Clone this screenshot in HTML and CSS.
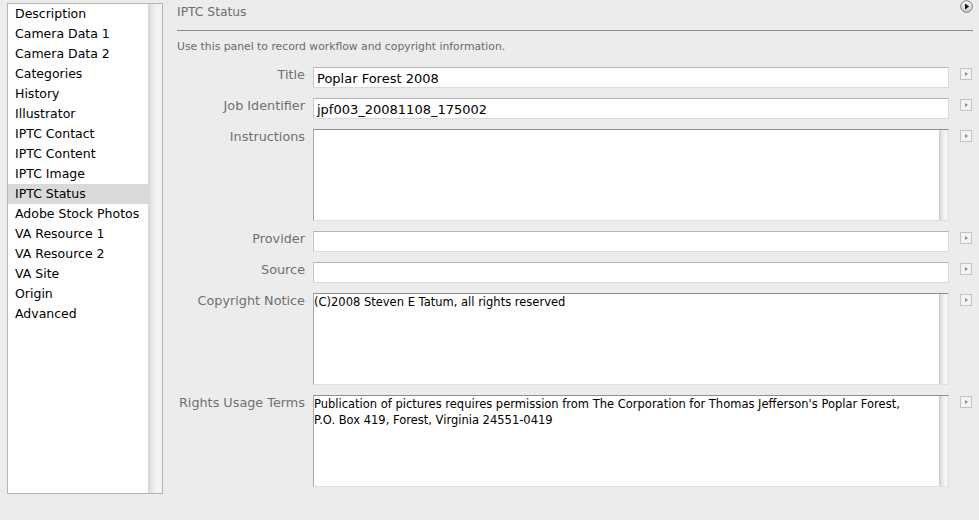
FILE: index.html
```html
<!DOCTYPE html>
<html>
<head>
<meta charset="utf-8">
<link rel="stylesheet" href="styles.css">
</head>
<body>
<div class="app">
  <div class="sidebar">
    <ul class="list">
      <li>Description</li>
      <li>Camera Data 1</li>
      <li>Camera Data 2</li>
      <li>Categories</li>
      <li>History</li>
      <li>Illustrator</li>
      <li>IPTC Contact</li>
      <li>IPTC Content</li>
      <li>IPTC Image</li>
      <li class="selected">IPTC Status</li>
      <li>Adobe Stock Photos</li>
      <li>VA Resource 1</li>
      <li>VA Resource 2</li>
      <li>VA Site</li>
      <li>Origin</li>
      <li>Advanced</li>
    </ul>
    <div class="track"></div>
  </div>
  <div class="main">
    <div class="header">
      <span class="title">IPTC Status</span>
      <svg class="menu-icon" width="13" height="13" viewBox="0 0 13 13">
        <defs>
          <linearGradient id="g" x1="0" y1="0" x2="0" y2="1">
            <stop offset="0" stop-color="#ffffff"/>
            <stop offset="1" stop-color="#c8c8c8"/>
          </linearGradient>
        </defs>
        <circle cx="6.5" cy="6.5" r="5.8" fill="url(#g)" stroke="#7a7a7a" stroke-width="1"/>
        <path d="M5 3.6 L9.2 6.5 L5 9.4 Z" fill="#111"/>
      </svg>
    </div>
    <p class="intro">Use this panel to record workflow and copyright information.</p>
    <div class="form">
      <div class="row">
        <label class="label">Title</label>
        <div class="field input"><span class="value">Poplar Forest 2008</span></div>
        <span class="arrow"></span>
      </div>
      <div class="row">
        <label class="label">Job Identifier</label>
        <div class="field input"><span class="value">jpf003_20081108_175002</span></div>
        <span class="arrow"></span>
      </div>
      <div class="row">
        <label class="label">Instructions</label>
        <div class="field area"><div class="area-text"></div><div class="area-track"></div></div>
        <span class="arrow"></span>
      </div>
      <div class="row">
        <label class="label">Provider</label>
        <div class="field input"></div>
        <span class="arrow"></span>
      </div>
      <div class="row">
        <label class="label">Source</label>
        <div class="field input"></div>
        <span class="arrow"></span>
      </div>
      <div class="row">
        <label class="label">Copyright Notice</label>
        <div class="field area"><div class="area-text">(C)2008 Steven E Tatum, all rights reserved</div><div class="area-track"></div></div>
        <span class="arrow"></span>
      </div>
      <div class="row">
        <label class="label">Rights Usage Terms</label>
        <div class="field area"><div class="area-text">Publication of pictures requires permission from The Corporation for Thomas Jefferson's Poplar Forest,<br>P.O. Box 419, Forest, Virginia 24551-0419</div><div class="area-track"></div></div>
        <span class="arrow"></span>
      </div>
    </div>
  </div>
</div>
</body>
</html>
```

FILE: styles.css
```css
html, body {
  margin: 0;
  padding: 0;
  width: 979px;
  height: 520px;
  overflow: hidden;
  background: #ececec;
  font-family: "DejaVu Sans", "Liberation Sans", sans-serif;
}

.app {
  display: flex;
  align-items: flex-start;
  padding-left: 7px;
}

.sidebar {
  margin-top: 3px;
  width: 154px;
  height: 489px;
  border: 1px solid #b4b4b4;
  display: flex;
  background: #fff;
}

.list {
  list-style: none;
  margin: 0;
  padding: 0;
  width: 140px;
  background: #fff;
}

.list li {
  height: 20px;
  line-height: 20px;
  padding-left: 7px;
  font-size: 12.5px;
  color: #000;
  white-space: nowrap;
}

.list li.selected {
  background: #d9d9d9;
}

.track {
  flex: 1;
  background: linear-gradient(to right, #d6d6d6 0%, #e8e8e8 30%, #f4f4f4 65%, #f1f1f1 100%);
}

.main {
  flex: 1;
  margin-left: 14px;
  margin-right: 6px;
}

.header {
  height: 30px;
  border-bottom: 1px solid #8c8c8c;
  display: flex;
  justify-content: space-between;
  align-items: flex-start;
}

.title {
  font-size: 12.3px;
  color: #6e6e6e;
  line-height: 16px;
  padding-top: 4px;
}

.menu-icon {
  display: block;
}

.intro {
  margin: 9px 0 0 0;
  font-size: 10.8px;
  line-height: 14px;
  color: #6a6a6a;
  white-space: nowrap;
}

.form {
  margin-top: 13px;
  display: flex;
  flex-direction: column;
  gap: 10px;
}

.row {
  display: flex;
  align-items: flex-start;
}

.label {
  width: 128px;
  text-align: right;
  font-size: 12.8px;
  line-height: 15px;
  color: #707070;
  white-space: nowrap;
  flex: none;
}

.field {
  margin-left: 8px;
  width: 636px;
  box-sizing: border-box;
  background: #fff;
  flex: none;
}

.input {
  height: 21px;
  border: 1px solid #dadada;
  border-top-color: #b4b4b4;
  border-left-color: #c8c8c8;
}

.value {
  display: block;
  padding-left: 3px;
  font-size: 13px;
  line-height: 21px;
  color: #000;
  white-space: nowrap;
}

.area {
  height: 92px;
  display: flex;
  border: 1px solid #e0e0e0;
  border-top-color: #8e8e8e;
  border-left-color: #a6a6a6;
}

.area-text {
  flex: 1;
  font-size: 11.5px;
  line-height: 16px;
  color: #000;
  white-space: nowrap;
  overflow: hidden;
}

.area-track {
  width: 9px;
  background: linear-gradient(to right, #c8c8c8 0%, #e4e4e4 30%, #f6f6f6 70%, #f0f0f0 100%);
}

.arrow {
  margin-left: 11px;
  margin-top: 1px;
  width: 10px;
  height: 10px;
  border: 1px solid #c4c4c4;
  background: #f3f3f3;
  position: relative;
  flex: none;
}

.arrow::after {
  content: "";
  position: absolute;
  left: 4px;
  top: 3px;
  border-left: 3px solid #8a8a8a;
  border-top: 2px solid transparent;
  border-bottom: 2px solid transparent;
}
```
